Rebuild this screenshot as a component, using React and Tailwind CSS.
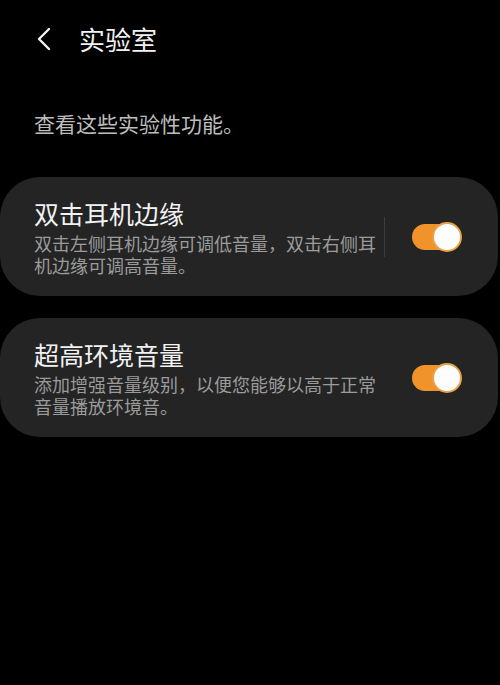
import React from "react";

const font = { fontFamily: '"Noto Sans CJK SC", "Noto Sans", sans-serif' };

const Toggle = () => (
  <div className="relative w-[46px] h-[26px] shrink-0">
    <div className="absolute left-0 top-0 w-[42px] h-[26px] rounded-full bg-[#f0932b]" />
    <div className="absolute left-[20px] top-[-2px] w-[30px] h-[30px] rounded-full bg-[#fdfdfd] border-2 border-[#e9a246]" />
  </div>
);

const Card = ({ title, desc, divider }) => (
  <div className="mr-[2px] h-[119px] rounded-[40px] bg-[#242424] flex items-center pl-[34px]">
    <div className="w-[350px] shrink-0">
      <div className="text-[25px] leading-[30px] text-[#f2f2f2]">{title}</div>
      <div className="mt-[4px] text-[18px] leading-[22px] text-[#9b9b9b]">{desc}</div>
    </div>
    <div className="flex-1 flex items-center">
      <div className={`w-px h-[40px] ${divider ? "bg-[#3c3c3c]" : "bg-transparent"}`} />
      <div className="ml-[27px]">
        <Toggle />
      </div>
    </div>
  </div>
);

export default function App() {
  return (
    <div className="w-[500px] h-[685px] bg-black overflow-hidden" style={font}>
      <div className="flex items-center h-[78px] pl-[35px]">
        <svg width="18" height="26" viewBox="0 0 18 26" className="shrink-0">
          <path d="M14 3 L4 13 L14 23" fill="none" stroke="#f2f2f2" strokeWidth="2.4" strokeLinecap="round" strokeLinejoin="round" />
        </svg>
        <div className="ml-[26px] text-[26px] leading-[30px] text-[#f2f2f2]">实验室</div>
      </div>
      <div className="pl-[34px] mt-[30px] text-[21px] leading-[30px] text-[#bdbdbd]">查看这些实验性功能。</div>
      <div className="mt-[39px] flex flex-col gap-[22px]">
        <Card
          title="双击耳机边缘"
          desc="双击左侧耳机边缘可调低音量，双击右侧耳机边缘可调高音量。"
          divider
        />
        <Card
          title="超高环境音量"
          desc="添加增强音量级别，以便您能够以高于正常音量播放环境音。"
        />
      </div>
    </div>
  );
}
